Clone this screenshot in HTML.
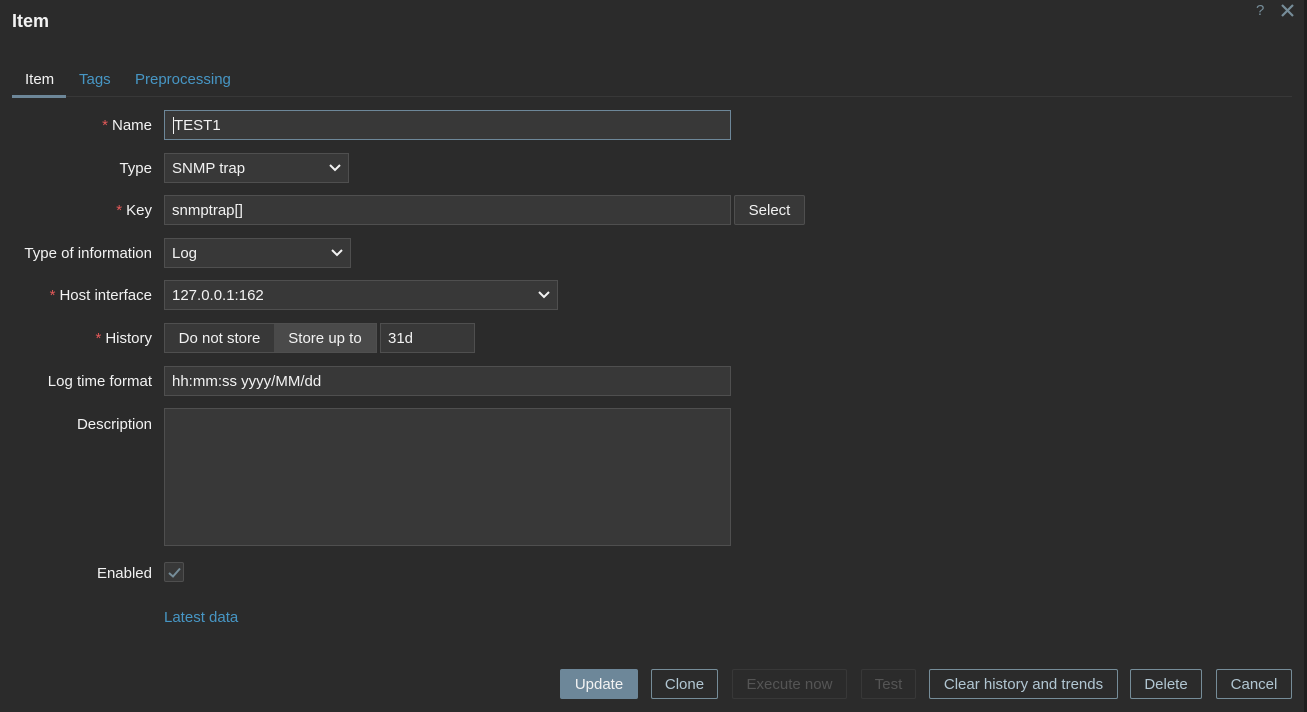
<!DOCTYPE html>
<html><head><style>
body{margin:0;width:1307px;height:712px;background:#2b2b2b;font-family:"Liberation Sans",Arial,sans-serif;font-size:15px;color:#f2f2f2;position:relative;overflow:hidden}
.a{position:absolute;box-sizing:border-box}
.in{background:#383838;border:1px solid #4f4f4f;padding:0 7px;line-height:30px;height:30px;color:#f2f2f2}
.lb{position:absolute;right:1155px;text-align:right;white-space:nowrap;line-height:32px}
.st{color:#e45959;margin-right:4px}
.chev{position:absolute;right:7px;top:10px}
.btn{border:1px solid #768d99;color:#b1c6d2;height:30px;line-height:30px;text-align:center;border-radius:2px}
.dis{border-color:#383838;color:#555}
</style></head><body>
<div class="a" style="left:12px;top:11px;font-size:18px;font-weight:bold">Item</div>
<div class="a" style="left:1256px;top:2px;color:#768d99;font-size:15px">?</div>
<svg class="a" style="left:1281px;top:4px" width="13" height="13"><path d="M1 1L12 12M12 1L1 12" stroke="#768d99" stroke-width="2.2"/></svg>
<div class="a" style="left:1304px;top:0;width:3px;height:712px;background:#1f1f1f"></div>
<div class="a" style="left:12px;top:96px;width:1280px;height:1px;background:#383838"></div>
<div class="a" style="left:12px;top:95px;width:54px;height:3px;background:#6d8799"></div>
<div class="a" style="left:25px;top:71px">Item</div>
<div class="a" style="left:79px;top:71px;color:#4796c4">Tags</div>
<div class="a" style="left:135px;top:71px;color:#4796c4">Preprocessing</div>

<div class="lb" style="top:110px"><span class="st">*</span>Name</div>
<div class="a in" style="left:164px;top:110px;width:567px;border-color:#6d8799"><span style="border-left:1px solid #f2f2f2;margin-left:1px">TEST1</span></div>
<div class="lb" style="top:153px">Type</div>
<div class="a in" style="left:164px;top:153px;width:185px">SNMP trap<svg class="chev" width="12" height="8"><path d="M1 1L6 6L11 1" stroke="#f2f2f2" stroke-width="2" fill="none"/></svg></div>
<div class="lb" style="top:195px"><span class="st">*</span>Key</div>
<div class="a in" style="left:164px;top:195px;width:567px">snmptrap[]</div>
<div class="a in" style="left:734px;top:195px;width:71px;background:#383838;text-align:center;padding:0;border-radius:2px">Select</div>
<div class="lb" style="top:238px">Type of information</div>
<div class="a in" style="left:164px;top:238px;width:187px">Log<svg class="chev" width="12" height="8"><path d="M1 1L6 6L11 1" stroke="#f2f2f2" stroke-width="2" fill="none"/></svg></div>
<div class="lb" style="top:280px"><span class="st">*</span>Host interface</div>
<div class="a in" style="left:164px;top:280px;width:394px">127.0.0.1:162<svg class="chev" width="12" height="8"><path d="M1 1L6 6L11 1" stroke="#f2f2f2" stroke-width="2" fill="none"/></svg></div>
<div class="lb" style="top:323px"><span class="st">*</span>History</div>
<div class="a in" style="left:164px;top:323px;width:213px;padding:0"></div>
<div class="a" style="left:165px;top:324px;width:109px;height:28px;line-height:30px;text-align:center">Do not store</div>
<div class="a" style="left:274px;top:324px;width:102px;height:28px;line-height:30px;text-align:center;background:#4a4a4a">Store up to</div>
<div class="a in" style="left:380px;top:323px;width:95px">31d</div>
<div class="lb" style="top:366px">Log time format</div>
<div class="a in" style="left:164px;top:366px;width:567px">hh:mm:ss yyyy/MM/dd</div>
<div class="lb" style="top:409px">Description</div>
<div class="a in" style="left:164px;top:408px;width:567px;height:138px"></div>
<div class="lb" style="top:558px">Enabled</div>
<div class="a" style="left:164px;top:562px;width:20px;height:20px;background:#383838;border:1px solid #4f4f4f;border-radius:2px"><svg style="position:absolute;left:3px;top:4px" width="13" height="11"><path d="M1 6L5 9.5L12 1.5" stroke="#768d99" stroke-width="2" fill="none"/></svg></div>
<div class="a" style="left:164px;top:609px;color:#4796c4">Latest data</div>

<div class="a btn" style="left:560px;top:669px;width:78px;background:#6d8799;border-color:#6d8799;color:#f2f2f2">Update</div>
<div class="a btn" style="left:651px;top:669px;width:67px">Clone</div>
<div class="a btn dis" style="left:732px;top:669px;width:115px">Execute now</div>
<div class="a btn dis" style="left:861px;top:669px;width:55px">Test</div>
<div class="a btn" style="left:929px;top:669px;width:189px">Clear history and trends</div>
<div class="a btn" style="left:1130px;top:669px;width:72px">Delete</div>
<div class="a btn" style="left:1216px;top:669px;width:76px">Cancel</div>
</body></html>
